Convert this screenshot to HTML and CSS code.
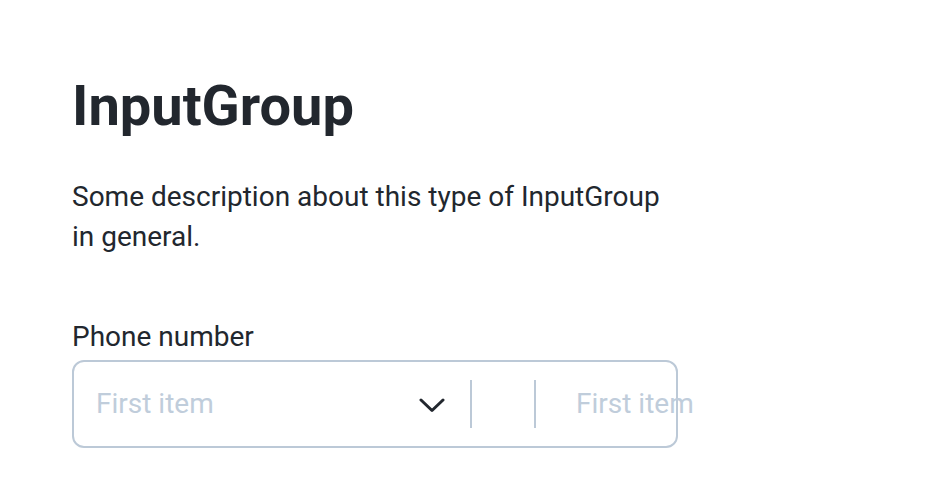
FILE: index.html
```html
<!DOCTYPE html>
<html lang="en">
<head>
<meta charset="utf-8">
<title>InputGroup</title>
<link rel="stylesheet" href="styles.css">
</head>
<body>
<main class="page">
  <h1 class="title">InputGroup</h1>
  <p class="desc">Some description about this type of InputGroup in general.</p>
  <div class="field">
    <label class="label">Phone number</label>
    <div class="group">
      <div class="select">
        <span class="placeholder">First item</span>
        <svg class="chev" width="26" height="16" viewBox="0 0 26 16" aria-hidden="true">
          <polyline points="2,3 13,13.5 24,3" fill="none" stroke="#22272e" stroke-width="3" stroke-linecap="round" stroke-linejoin="round"/>
        </svg>
      </div>
      <span class="divider"></span>
      <div class="empty"></div>
      <span class="divider"></span>
      <div class="input"><span class="placeholder">First item</span></div>
    </div>
  </div>
</main>
</body>
</html>
```

FILE: styles.css
```css
* { box-sizing: border-box; }
html, body { margin: 0; padding: 0; background: #ffffff; }
body {
  font-family: Roboto, "Noto Sans", "Liberation Sans", sans-serif;
  color: #22272e;
}
.page {
  padding: 73px 0 0 72px;
  width: 678px;
}
.title {
  margin: 0;
  font-size: 56px;
  line-height: 67px;
  font-weight: 700;
  letter-spacing: 0;
}
.desc {
  margin: 37px 0 0;
  font-size: 28px;
  line-height: 40px;
  font-weight: 400;
}
.field {
  margin-top: 64px;
  display: flex;
  flex-direction: column;
  gap: 7px;
}
.label {
  font-size: 28px;
  line-height: 32px;
}
.group {
  display: flex;
  align-items: center;
  height: 88px;
  border: 2px solid #bcc9d7;
  border-radius: 12px;
  white-space: nowrap;
}
.placeholder {
  font-size: 28px;
  line-height: 32px;
  color: #c0cddb;
}
.select {
  display: flex;
  align-items: center;
  justify-content: space-between;
  width: 396px;
  padding: 0 25px 0 22px;
}
.chev { display: block; margin-top: 1px; }
.divider {
  width: 2px;
  height: 48px;
  background: #bcc9d7;
  flex: none;
}
.empty { width: 62px; flex: none; }
.input {
  flex: 1;
  min-width: 0;
  padding-left: 40px;
  overflow: visible;
}
```
